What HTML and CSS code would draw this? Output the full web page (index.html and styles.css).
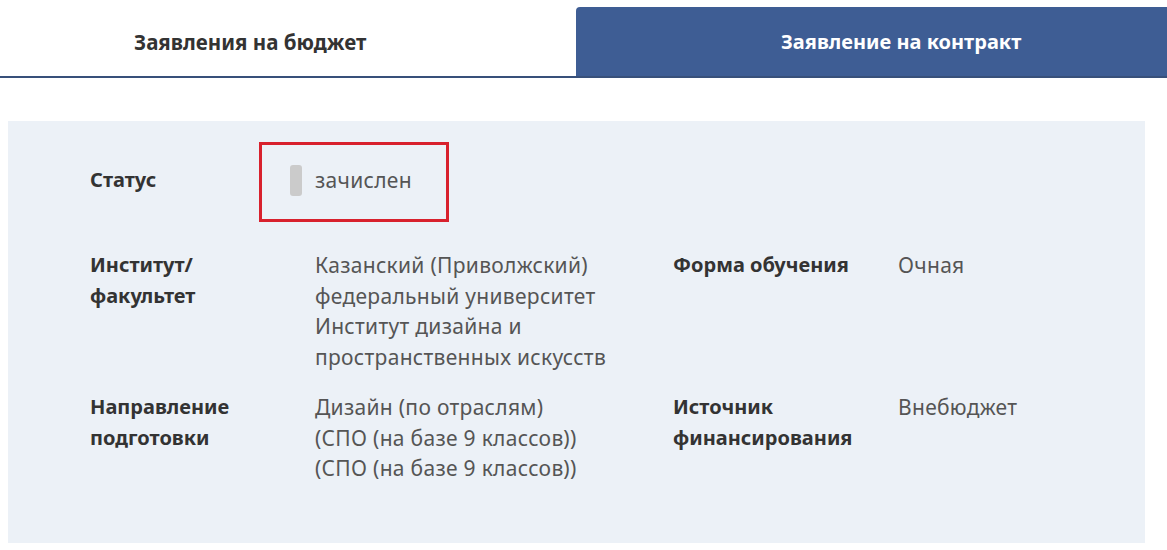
FILE: index.html
```html
<!DOCTYPE html>
<html lang="ru">
<head>
<meta charset="utf-8">
<title>Заявления</title>
<link rel="stylesheet" href="styles.css">
</head>
<body>
<div class="tabs">
  <div class="tab tab-left">Заявления на бюджет</div>
  <div class="tab tab-right">Заявление на контракт</div>
</div>
<div class="panel">
  <div class="status-row">
    <div class="label status-label">Статус</div>
    <div class="status-box">
      <span class="pill"></span>
      <span class="value">зачислен</span>
    </div>
  </div>
  <div class="grid">
    <div class="label">Институт/<br>факультет</div>
    <div class="value">Казанский (Приволжский)<br>федеральный университет<br>Институт дизайна и<br>пространственных искусств</div>
    <div class="label">Форма обучения</div>
    <div class="value">Очная</div>
    <div class="label">Направление<br>подготовки</div>
    <div class="value">Дизайн (по отраслям)<br>(СПО (на базе 9 классов))<br>(СПО (на базе 9 классов))</div>
    <div class="label">Источник<br>финансирования</div>
    <div class="value">Внебюджет</div>
  </div>
</div>
</body>
</html>
```
FILE: styles.css
```css
html, body {
  margin: 0;
  padding: 0;
  background: #ffffff;
  font-family: "Noto Sans", "Open Sans", sans-serif;
}
.tabs {
  display: flex;
  align-items: flex-end;
  height: 76px;
  border-bottom: 2px solid #38507a;
}
.tab {
  font-size: 20px;
  font-weight: 700;
  line-height: 30px;
}
.tab-left {
  width: 576px;
  height: 76px;
  box-sizing: border-box;
  padding: 27px 0 0 134px;
  color: #333333;
  font-size: 20.5px;
}
.tab-right {
  flex: 1;
  height: 69px;
  box-sizing: border-box;
  padding: 20px 0 0 205px;
  background: #3e5d94;
  color: #ffffff;
  border-top-left-radius: 4px;
}
.panel {
  margin: 43px 22px 0 8px;
  background: #ecf1f7;
  padding: 21px 0 60px 82px;
  height: 422px;
  box-sizing: border-box;
}
.label {
  font-size: 20px;
  font-weight: 700;
  color: #333333;
  line-height: 30.7px;
}
.value {
  font-size: 21px;
  letter-spacing: 0.3px;
  color: #555555;
  line-height: 30.7px;
}
.status-row {
  display: flex;
  align-items: center;
}
.status-label {
  width: 169px;
  margin-bottom: 4px;
}
.status-box {
  display: flex;
  align-items: center;
  gap: 13px;
  width: 190px;
  height: 80px;
  box-sizing: border-box;
  border: 3px solid #d8212d;
  padding: 0 0 4px 28px;
}
.pill {
  width: 12px;
  height: 31px;
  border-radius: 3px;
  background: #cbcbcb;
}
.grid {
  margin-top: 28px;
  display: grid;
  grid-template-columns: 225px 358px 225px 1fr;
  row-gap: 19px;
}
```
